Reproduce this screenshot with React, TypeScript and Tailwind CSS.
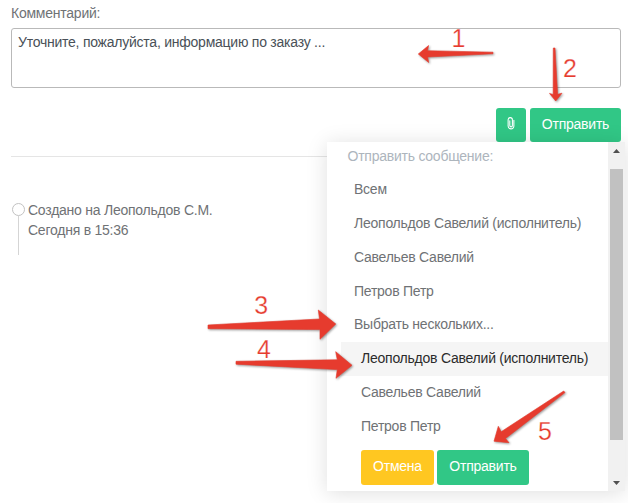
import React from 'react';

const people = ['Леопольдов Савелий (исполнитель)', 'Савельев Савелий', 'Петров Петр'];

const arrows = [
  '493,52.2 427.6,50.7 428.6,45.5 418.3,54 428.7,62.5 427.6,57 493,53.8',
  '553.3,48 553.2,94.5 549.5,93.4 555.7,101 562,93.2 557.6,94.3 555,48',
  '208,325 319.5,319 318.3,310 335.8,324 320,339.3 320,329.6 208,328.7',
  '236,361.3 337.3,359.8 335.7,351.7 352,365.3 336,378.3 337.3,369.6 236,364.2',
  '563.7,391 501.2,431.7 498.3,426.3 494,441.2 509,442.7 505.5,438.5 565,392.6',
];

const steps = [
  { n: '1', x: 451.4, y: 47 },
  { n: '2', x: 563, y: 77 },
  { n: '3', x: 254.2, y: 313.5 },
  { n: '4', x: 257, y: 358 },
  { n: '5', x: 538, y: 439.5 },
];

function Annotations() {
  return (
    <svg className="pointer-events-none absolute left-0 top-0" width="628" height="503" viewBox="0 0 628 503">
      <g fill="#e63b2e" stroke="#e63b2e" strokeWidth="0.6" strokeLinejoin="round" className="drop-shadow-[1px_1px_1px_rgba(0,0,0,0.4)]">
        {arrows.map((p) => (
          <polygon key={p} points={p} />
        ))}
      </g>
      <g fill="#e63b2e" stroke="white" strokeWidth="0.25" fontFamily="'Liberation Sans', sans-serif" fontSize="25" className="tracking-normal">
        {steps.map((s) => (
          <text key={s.n} x={s.x} y={s.y}>{s.n}</text>
        ))}
      </g>
    </svg>
  );
}

function Menu() {
  return (
    <div className="absolute left-[327px] top-[142px] flex h-[349px] w-[298px] bg-white shadow-[0_2px_20px_rgba(0,0,0,0.13)]">
      <div className="w-[281px]">
        <div className="h-[30.3px] pl-[20.5px] pt-1 leading-5 text-[#adb5bd]">Отправить сообщение:</div>
        {['Всем', ...people, 'Выбрать нескольких...'].map((t) => (
          <div key={t} className="h-[33.8px] pl-[27px] leading-[34px]">{t}</div>
        ))}
        <div className="ml-[14px] pt-[0.7px]">
          {people.map((t, i) => (
            <div key={t} className={i === 0 ? 'h-[34px] bg-[#f5f5f5] pl-5 leading-[33px] text-[#2b2b2b]' : 'h-[34px] pl-5 leading-[33px]'}>{t}</div>
          ))}
          <div className="flex gap-[3px] pl-5 pt-[6px] text-white">
            <button className="h-[35px] w-[73px] rounded-[3px] bg-[#ffc721] pb-0.5">Отмена</button>
            <button className="h-[35px] w-[92px] rounded-[3px] bg-[#31c786] pb-0.5">Отправить</button>
          </div>
        </div>
      </div>
      <div className="flex w-[17px] flex-col items-center bg-[#f1f1f1]">
        <div className="flex h-[27px] items-start pt-[7px]">
          <svg width="7" height="4" viewBox="0 0 7 4"><path d="M0 4 3.5 0 7 4z" fill="#505050" /></svg>
        </div>
        <div className="h-[271px] w-[13px] bg-[#c1c1c1]" />
        <div className="pt-[41px]">
          <svg width="7" height="4" viewBox="0 0 7 4"><path d="M0 0 3.5 4 7 0z" fill="#505050" /></svg>
        </div>
      </div>
    </div>
  );
}

export default function App() {
  return (
    <div className="relative h-[503px] w-[628px] overflow-hidden bg-white pl-[11px] pr-[7px] pt-[3px] font-['Liberation_Sans',sans-serif] text-[14px] leading-5 tracking-[-0.24px] text-[#6f7275]">
      <div className="h-[25px]">Комментарий:</div>
      <div className="h-[60px] rounded-[3px] border border-[#b9b9b9] px-1.5 pt-[3px] text-[#495057]">
        Уточните, пожалуйста, информацию по заказу ...
      </div>
      <div className="mt-5 flex justify-end gap-1 text-white">
        <button className="flex h-[34px] w-[30px] items-center justify-center rounded-[3px] bg-[#31c786] pb-[3px]">
          <svg width="8" height="13" viewBox="0 0 8 14" fill="none" stroke="white" strokeWidth="1.15" strokeLinecap="round">
            <path d="M7.1 3.5v6.2a3.1 3.1 0 0 1-6.2 0V3a2.3 2.3 0 0 1 4.6 0v6.2a1.4 1.4 0 0 1-2.8 0V4" />
          </svg>
        </button>
        <button className="h-[34px] w-[91px] rounded-[3px] bg-[#31c786] pb-0.5">Отправить</button>
      </div>
      <div className="mt-[14px] h-px bg-[#e5e5e5]" />
      <div className="mt-[43px] flex gap-[3px] pl-px">
        <div className="flex w-[13px] flex-col items-center pt-[3px]">
          <div className="h-[13px] w-[13px] shrink-0 rounded-full border border-[#c2c2c2] bg-white" />
          <div className="h-[39px] w-px bg-[#d5d5d5]" />
        </div>
        <div>
          <div>Создано на Леопольдов С.М.</div>
          <div>Сегодня в 15:36</div>
        </div>
      </div>
      <Menu />
      <Annotations />
    </div>
  );
}
